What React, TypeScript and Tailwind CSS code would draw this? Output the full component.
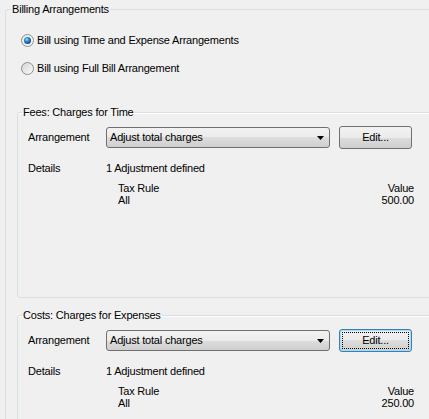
import React from "react";

const grad =
  "bg-[linear-gradient(#f2f2f2_0%,#ebebeb_50%,#dddddd_50%,#cfcfcf_100%)]";

function Radio({ checked }: { checked?: boolean }) {
  return (
    <svg width="13" height="13" viewBox="0 0 13 13" className="shrink-0">
      <defs>
        <linearGradient id={checked ? "rgOn" : "rgOff"} x1="0" y1="0" x2="1" y2="1">
          <stop offset="0" stopColor={checked ? "#e6e6e6" : "#d4d4d4"} />
          <stop offset="1" stopColor="#fbfbfb" />
        </linearGradient>
        <radialGradient id="dot" cx="0.4" cy="0.35" r="0.7">
          <stop offset="0" stopColor="#9adcff" />
          <stop offset="0.45" stopColor="#2b84cf" />
          <stop offset="1" stopColor="#0b3d7a" />
        </radialGradient>
      </defs>
      <circle
        cx="6.5"
        cy="6.5"
        r="6"
        fill={checked ? "url(#rgOn)" : "url(#rgOff)"}
        stroke="#8e8f8f"
        strokeWidth="1"
      />
      {checked && <circle cx="6.5" cy="6.5" r="3.5" fill="url(#dot)" />}
    </svg>
  );
}

function Combo() {
  return (
    <div
      className={`w-[224px] h-[21px] rounded-[3px] border border-[#707070] ${grad} flex items-center pl-[3px] pr-[5px]`}
    >
      <span className="flex-1">Adjust total charges</span>
      <svg width="7" height="4" viewBox="0 0 7 4">
        <path d="M0 0h7L3.5 4z" fill="#000" />
      </svg>
    </div>
  );
}

function EditButton({ focused }: { focused?: boolean }) {
  if (focused) {
    return (
      <div
        className={`ml-[9px] w-[73px] h-[23px] rounded-[3px] border border-[#3c7fb1] shadow-[inset_0_0_0_1px_#9fdcf8] ${grad} p-[2px] flex`}
      >
        <div className="flex-1 border border-dotted border-black flex items-center justify-center">
          Edit...
        </div>
      </div>
    );
  }
  return (
    <div
      className={`ml-[9px] w-[73px] h-[23px] rounded-[3px] border border-[#707070] ${grad} flex items-center justify-center`}
    >
      Edit...
    </div>
  );
}

function ChargeGroup({ title, value, focused }: { title: string; value: string; focused?: boolean }) {
  return (
    <fieldset className="ml-[11px] w-[500px] h-[192px] border border-[#d5dfe5] rounded-[3px] shadow-[inset_0_1px_0_#ffffff]">
      <legend className="ml-[4px] px-[1px] leading-[13px]">{title}</legend>

      {/* Arrangement */}
      <div className="mt-[7px] pl-[10px] h-[23px] flex items-center">
        <span className="w-[78px]">Arrangement</span>
        <Combo />
        <EditButton focused={focused} />
      </div>

      {/* Details */}
      <div className="mt-[13px] pl-[10px] h-[13px] flex items-center">
        <span className="w-[78px]">Details</span>
        <span>1 Adjustment defined</span>
      </div>

      <div className="mt-[7px] ml-[100px] w-[296px] leading-[12px]">
        <div className="flex justify-between h-[12px]">
          <span>Tax Rule</span>
          <span>Value</span>
        </div>
        <div className="flex justify-between h-[12px]">
          <span>All</span>
          <span>{value}</span>
        </div>
      </div>
    </fieldset>
  );
}

export default function App() {
  return (
    <div className="w-[429px] h-[419px] overflow-hidden bg-[#f0f0f0] text-black text-[11px] leading-[13px] tracking-[-0.2px] font-['Liberation_Sans',Arial,sans-serif]">
      <fieldset className="mt-[3px] ml-[5px] w-[520px] h-[480px] border border-[#d5dfe5] rounded-[3px]">
        <legend className="ml-[5px] px-[1px] leading-[13px]">Billing Arrangements</legend>

        <div className="mt-[18px] pl-[15px] h-[13px] flex items-center gap-[3px]">
          <Radio checked />
          <span>Bill using Time and Expense Arrangements</span>
        </div>
        <div className="mt-[15px] pl-[15px] h-[13px] flex items-center gap-[3px]">
          <Radio />
          <span>Bill using Full Bill Arrangement</span>
        </div>

        <div className="mt-[31px]">
          <ChargeGroup title="Fees: Charges for Time" value="500.00" />
        </div>
        <div className="mt-[11px]">
          <ChargeGroup title="Costs: Charges for Expenses" value="250.00" focused />
        </div>
      </fieldset>
    </div>
  );
}
